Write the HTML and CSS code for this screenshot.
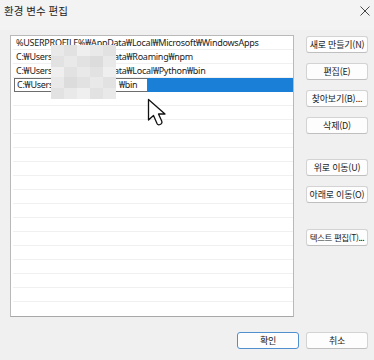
FILE: index.html
```html
<!DOCTYPE html>
<html lang="ko">
<head>
<meta charset="utf-8">
<title>환경 변수 편집</title>
<link rel="stylesheet" href="styles.css">
</head>
<body>
<div class="window">
  <div class="titlebar">
    <span class="title">환경 변수 편집</span>
    <svg class="close" width="10" height="10" viewBox="0 0 10 10"><path d="M0.5 0.5 L9.5 9.5 M9.5 0.5 L0.5 9.5" stroke="#333" stroke-width="0.9" fill="none"/></svg>
  </div>
  <div class="content">
    <div class="list">
      <div class="row">%USERPROFILE%₩AppData₩Local₩Microsoft₩WindowsApps</div>
      <div class="row">C:₩Users₩<span class="hid h2"></span>ata₩Roaming₩npm</div>
      <div class="row">C:₩Users₩<span class="hid h3"></span>ata₩Local₩Python₩bin</div>
      <div class="row sel"><span class="edit">C:₩Users₩<span class="hid h4"></span>₩bin</span><span class="selfill"></span></div>
      <div class="row"></div><div class="row"></div><div class="row"></div><div class="row"></div>
      <div class="row"></div><div class="row"></div><div class="row"></div><div class="row"></div>
      <div class="row"></div><div class="row"></div><div class="row"></div><div class="row"></div>
      <div class="row"></div><div class="row"></div><div class="row"></div><div class="row last"></div>
      <div class="mosaic">
        <i class="m1"></i><i class="m2"></i><i class="m0"></i><i class="m1"></i><i class="m2"></i>
        <i class="m2"></i><i class="m1"></i><i class="m2"></i><i class="m3"></i><i class="m1"></i>
        <i class="m0"></i><i class="m2"></i><i class="m1"></i><i class="m2"></i><i class="m0"></i>
        <i class="m1"></i><i class="m3"></i><i class="m2"></i><i class="m1"></i><i class="m2"></i>
        <i class="m2"></i><i class="m1"></i><i class="m0"></i><i class="m2"></i><i class="m1"></i>
      </div>
      <svg class="cursor" width="20" height="30" viewBox="0 0 20 30"><path d="M1.5 1.5 L1.5 22 L6.5 17.5 L10 25.5 Q11 27.5 13 26.5 L14 26 Q15.5 25 14.8 23.3 L11.5 16 L18 16 Z" fill="#fff" stroke="#111" stroke-width="1.3" stroke-linejoin="round"/></svg>
    </div>
    <div class="buttons">
      <button class="btn">새로 만들기(N)</button>
      <button class="btn">편집(E)</button>
      <button class="btn">찾아보기(B)...</button>
      <button class="btn">삭제(D)</button>
      <button class="btn g1">위로 이동(U)</button>
      <button class="btn">아래로 이동(O)</button>
      <button class="btn g2 tight">텍스트 편집(T)...</button>
    </div>
  </div>
  <div class="footer">
    <button class="btn primary">확인</button>
    <button class="btn">취소</button>
  </div>
</div>
</body>
</html>
```
FILE: styles.css
```css
* { box-sizing: border-box; }
html, body { margin: 0; padding: 0; }
body {
  width: 374px;
  height: 360px;
  background: #f0f0f0;
  font-family: "Noto Sans", "Noto Sans CJK KR", sans-serif;
  color: #1a1a1a;
  overflow: hidden;
}
.window { width: 374px; height: 360px; display: flex; flex-direction: column; }
.titlebar {
  height: 30px;
  background: #f3f3f3;
  display: flex;
  align-items: center;
  justify-content: space-between;
  padding: 0 3px 9px 4px;
}
.title { font-family: "Noto Sans CJK KR", sans-serif; font-size: 10.5px; color: #222; }
.close { margin-right: 1px; }
.content {
  display: flex;
  padding: 5px 0 0 10px;
  gap: 12px;
}
.list {
  position: relative;
  width: 284px;
  height: 282px;
  background: #fff;
  border: 1px solid #b9b9b9;
  border-bottom-color: #a8a8a8;
  padding: 0 0 0 2px;
  overflow: hidden;
}
.row {
  height: 14px;
  border-bottom: 1px solid #f0f0f0;
  font-size: 9px;
  letter-spacing: -0.25px;
  line-height: 13px;
  padding-left: 3px;
  white-space: nowrap;
  display: flex;
  color: #222;
}
.row.last { border-bottom: none; }
.hid { display: inline-block; }
.h2 { width: 56px; }
.h3 { width: 56px; }
.h4 { width: 60px; }
.row.sel { padding-left: 1px; border-bottom: none; height: 14px; }
.edit {
  width: 134px;
  height: 14px;
  border: 1px solid #6e6e6e;
  background: #fff;
  padding-left: 2px;
  line-height: 12px;
  display: flex;
}
.selfill { flex: 1; background: #1a7fd6; height: 14px; }
.mosaic {
  position: absolute;
  left: 40px;
  top: 9px;
  width: 65px;
  height: 54px;
  display: grid;
  grid-template-columns: repeat(5, 1fr);
  grid-template-rows: repeat(5, 1fr);
}
.mosaic i { display: block; }
.m0 { background: #efefef; }
.m1 { background: #e9e9e9; }
.m2 { background: #e2e2e2; }
.m3 { background: #dcdcdc; }
.cursor { position: absolute; left: 136px; top: 62px; }
.buttons {
  display: flex;
  flex-direction: column;
  gap: 10px;
  padding-top: 1px;
}
.btn {
  width: 62px;
  height: 17px;
  padding: 0;
  background: #fdfdfd;
  border: 1px solid #d3d3d3;
  border-bottom-color: #bfbfbf;
  border-radius: 3px;
  font-family: "Noto Sans CJK KR", sans-serif;
  font-size: 9px;
  line-height: 15px;
  letter-spacing: -0.2px;
  color: #1a1a1a;
  white-space: nowrap;
  overflow: hidden;
}
.tight { font-size: 8.5px; letter-spacing: -0.4px; }
.g1 { margin-top: 15px; }
.g2 { margin-top: 16px; }
.footer {
  margin-top: auto;
  display: flex;
  justify-content: flex-end;
  gap: 7px;
  padding: 0 6px 11px 0;
}
.primary { border: 1px solid #4f8fd0; }
```
